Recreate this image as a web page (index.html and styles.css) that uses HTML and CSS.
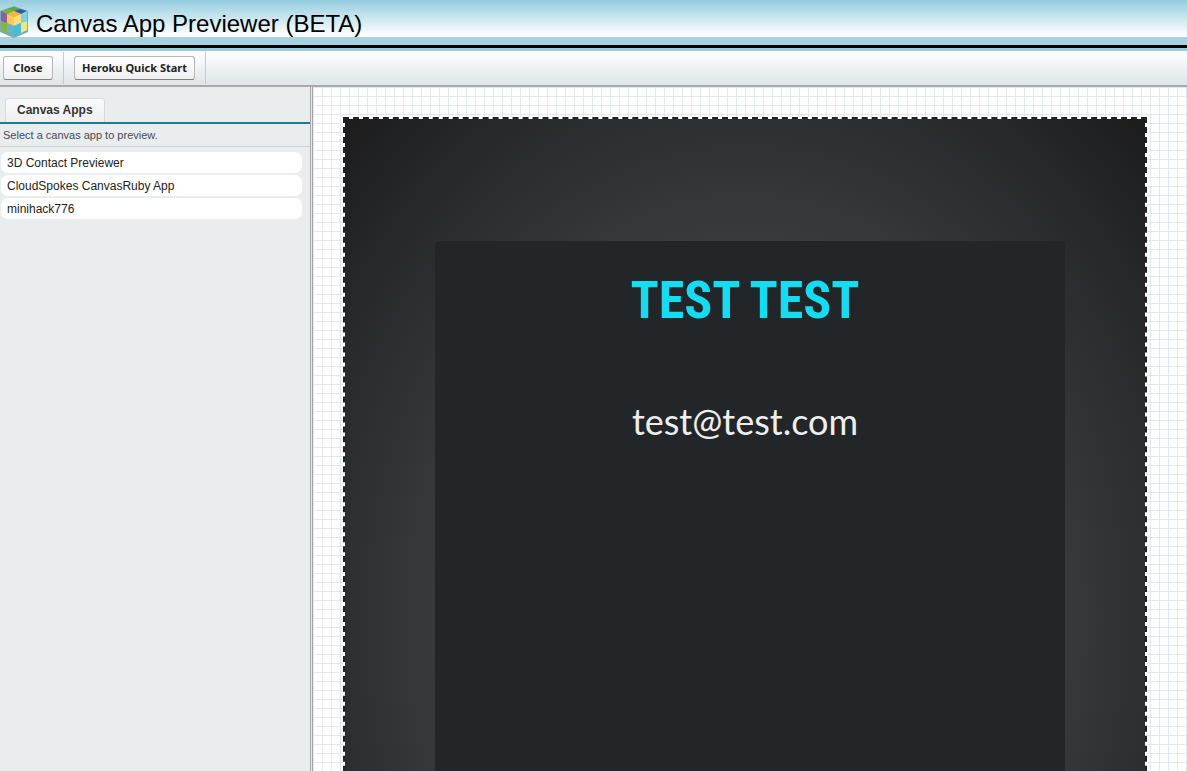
FILE: index.html
```html
<!DOCTYPE html>
<html lang="en">
<head>
<meta charset="utf-8">
<title>Canvas App Previewer</title>
<link rel="stylesheet" href="styles.css">
</head>
<body>
<header class="header">
  <svg class="logo" viewBox="0 0 28 32" aria-hidden="true">
    <path fill="#7fa9b5" d="M14 0 28 5v21L14 32 0 26V5z"/>
    <path fill="#62a63a" d="m14 1 6 2-6 2-7-2z"/>
    <path fill="#76b43b" d="m7 3 7 2-6 3-7-3z"/>
    <path fill="#3059a8" d="m14 5 6-2 7 2-6 3z"/>
    <path fill="#f0b934" d="m14 5 7 3-7 3-6-3z"/>
    <path fill="#8e5cab" d="m1 5 6 3v9l-6-2z"/>
    <path fill="#ffc957" d="m7 8 7 3v9l-7-3z"/>
    <path fill="#ffdf7c" d="m14 11 7-3v9l-7 3z"/>
    <path fill="#7bd3ea" d="m21 8 6-3v10l-6 2z"/>
    <path fill="#84b63a" d="m1 15 6 2v10l-6-3z"/>
    <path fill="#6ab4c8" d="m7 17 7 3v10l-7-3z"/>
    <path fill="#49bad8" d="m14 20 7-3v10l-7 3z"/>
    <path fill="#eee883" d="m21 17 6-2v9l-6 3z"/>
  </svg>
  <h1 class="title">Canvas App Previewer (BETA)</h1>
</header>
<div class="stripe"></div>
<nav class="toolbar">
  <div class="tool-group"><button class="button" type="button">Close</button></div>
  <div class="tool-group"><button class="button" type="button">Heroku Quick Start</button></div>
</nav>
<div class="workspace">
  <aside class="sidebar">
    <div class="tabs"><button class="tab" type="button">Canvas Apps</button></div>
    <p class="hint">Select a canvas app to preview.</p>
    <ul class="apps">
      <li><a class="app" href="#">3D Contact Previewer</a></li>
      <li><a class="app" href="#">CloudSpokes CanvasRuby App</a></li>
      <li><a class="app" href="#">minihack776</a></li>
    </ul>
  </aside>
  <main class="stage">
    <section class="frame">
      <div class="card">
        <h2 class="name">TEST TEST</h2>
        <p class="email">test@test.com</p>
      </div>
    </section>
  </main>
</div>
</body>
</html>
```
FILE: styles.css
```css
* { box-sizing: border-box; }
body {
  margin: 0;
  height: 100vh;
  overflow: hidden;
  display: flex;
  flex-direction: column;
  font-family: "Liberation Sans", Arial, sans-serif;
  color: #222;
}
.header {
  display: flex;
  align-items: center;
  gap: 8px;
  height: 45px;
  padding-bottom: 1px;
  background: linear-gradient(#95cddf, #fff 36px, #fff 37px, #a7d3e1 37px, #a7d3e1);
  flex: none;
}
.logo { width: 28px; height: 32px; }
.title { margin: 0; padding-top: 3px; font-size: 24px; line-height: 28px; font-weight: 400; color: #000; }
.stripe { height: 6px; flex: none; border-top: 3px solid #000; background: #9acbdc; }
.toolbar {
  display: flex;
  flex: none;
  height: 36px;
  border-bottom: 2px solid #aaa;
  background: linear-gradient(#fff, #dfe5e8);
}
.tool-group {
  display: flex;
  align-items: center;
  margin: 1px 0;
  padding: 0 10px;
  border-right: 1px solid #c5c9cb;
}
.tool-group:first-child { padding-left: 3px; }
.button {
  height: 24px;
  min-width: 50px;
  padding: 0 7px 2px;
  border: 1px solid #b5b5b5;
  border-bottom-color: #7f7f7f;
  border-radius: 3px;
  background: linear-gradient(#fff, #f0f0f0);
  color: #222;
  font: bold 11px "Noto Sans", sans-serif;
}
.workspace { display: flex; flex: 1; min-height: 0; }
.sidebar { width: 313px; flex: none; background: #e9edee; border-right: 3px double #a5a5a5; }
.tabs { display: flex; height: 37px; padding: 11px 5px 0; border-bottom: 2px solid #1a7a9c; }
.tab {
  height: 24px;
  padding: 0 11px 2px;
  border: 1px solid #d9dcdd;
  border-bottom: 0;
  border-radius: 3px 3px 0 0;
  background: linear-gradient(#fafafa, #efefef);
  color: #333;
  font: bold 12px "Liberation Sans", Arial, sans-serif;
}
.hint { margin: 0; padding: 0 3px; font-size: 11px; line-height: 22px; color: #4a4a56; border-bottom: 1px solid #cfd2d4; }
.apps { list-style: none; margin: 0; padding: 5px 8px 0 1px; display: grid; gap: 2px; }
.app {
  display: block;
  padding: 1px 6px 0;
  border-radius: 7px;
  background: #fff;
  color: #222;
  font-size: 12px;
  line-height: 20px;
  text-decoration: none;
}
.stage {
  flex: 1;
  min-width: 0;
  overflow: hidden;
  padding: 30px 40px 0 30px;
  background:
    linear-gradient(#e1e9f0 1px, transparent 1px) 0 0 / 9px 9px,
    linear-gradient(90deg, #e1e9f0 1px, #fff 1px) 0 0 / 9px 9px;
}
.frame {
  display: flex;
  height: 1004px;
  padding: 122px 80px 0 90px;
  border: 2px dashed #222;
  background: radial-gradient(ellipse farthest-corner, #4b5559, #373b3d 54%, #2d3032 71%, #1c1c1d) padding-box, linear-gradient(#fff, #fff) border-box;
}
.card { flex: 1; padding: 24px 10px 0 0; border-radius: 4px; background: #222628; text-align: center; }
.name { margin: 0; font: bold 52px/72px "Roboto Condensed", "Liberation Sans Narrow", "Liberation Sans", sans-serif; color: #15dcf0; }
.email { margin: 60px 0 0; font: 36px/48px Lato, sans-serif; color: #eee; }
```
